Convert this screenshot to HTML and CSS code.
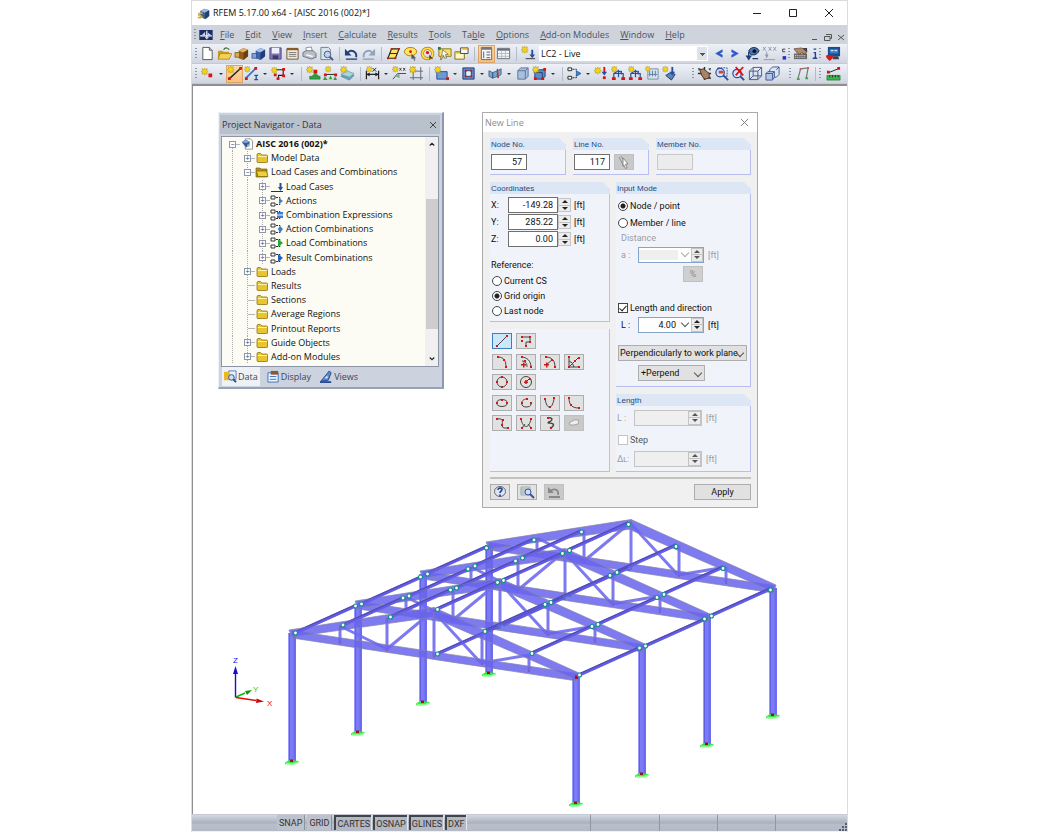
FILE: index.html
```html
<!DOCTYPE html>
<html lang="en">
<head>
<meta charset="utf-8">
<title>RFEM 5.17.00 x64 - [AISC 2016 (002)*]</title>
<link rel="stylesheet" href="styles.css">
</head>
<body>
<svg class="sprite" aria-hidden="true">
  <defs>
    <symbol id="cube" viewBox="0 0 16 16"><path d="M4 5l5-3 6 2v7l-5 4-6-3z" fill="#3d5f92"/><path d="M4 5l5-3 6 2-5 3z" fill="#9db8dc"/><path d="M10 7l5-3v7l-5 4z" fill="#23406e"/><path d="M7 8c-3-1-5 0-5 1.500s4 1 4 2.500-3 1.500-5 .5" fill="none" stroke="#e0a926" stroke-width="2"/></symbol>
    <symbol id="mdi" viewBox="0 0 16 12"><path d="M0 0h16v12H0z" fill="#1c2c66"/><path d="M1 7h14M9 1v10" stroke="#fff" stroke-width="1.400"/><path d="M3 6l4-4v4zM10 6V3l4 3zM7 8h4v2H7z" fill="#c9d3ef"/></symbol>
    <symbol id="new" viewBox="0 0 16 16"><path d="M3 1.500h7l3 3v10H3z" fill="#fff" stroke="#555"/><path d="M10 1.500v3h3" fill="#ddd" stroke="#555"/></symbol>
    <symbol id="open" viewBox="0 0 16 16"><path d="M1 5h5l1 1h6v8H1z" fill="#c99a1d"/><path d="M3.500 8H16l-3 6H1z" fill="#f2cf55" stroke="#92700f" stroke-width=".6"/><path d="M7 4c2-3 5-2 6 0" fill="none" stroke="#3c6b31" stroke-width="1.300"/></symbol>
    <symbol id="boxbrown" viewBox="0 0 16 16"><path d="M5 5l5-3 5 2v7l-5 4-5-2z" fill="#96601a"/><path d="M5 5l5-3 5 2-5 3z" fill="#e0b268"/><path d="M10 7l5-3v7l-5 4z" fill="#6b420e"/><path d="M1 7h5v5H1z" fill="#e0a845" stroke="#6b420e" stroke-width=".7"/></symbol>
    <symbol id="boxblue" viewBox="0 0 16 16"><path d="M5 5l5-3 5 2v7l-5 4-5-2z" fill="#3d66ad"/><path d="M5 5l5-3 5 2-5 3z" fill="#a5c3ef"/><path d="M10 7l5-3v7l-5 4z" fill="#203d7a"/><path d="M1 8h5v5H1z" fill="#7fa5e0" stroke="#203d7a" stroke-width=".7"/></symbol>
    <symbol id="save" viewBox="0 0 16 16"><path d="M2 2h12v12H2z" fill="#8076b5" stroke="#544b85"/><path d="M4 2h8v6H4z" fill="#eef0fa"/><path d="M5 10h6v4H5z" fill="#3f3a66"/></symbol>
    <symbol id="notes" viewBox="0 0 16 16"><path d="M2 3h12v11H2z" fill="#f3ead7" stroke="#6d5136"/><path d="M2 2h12v2.500H2z" fill="#8b5a2b"/><path d="M4 7h8M4 9h8M4 11h8" stroke="#7b7b7b"/></symbol>
    <symbol id="print" viewBox="0 0 16 16"><path d="M4 2l6-1 1 5H5z" fill="#fff" stroke="#777" stroke-width=".8"/><path d="M1 7l3-2h8l3 3v4l-5 2-9-3z" fill="#b6bcc8" stroke="#5a6070" stroke-width=".8"/><path d="M4 10l7 2 1-1.500-7-2z" fill="#f4f4f4"/></symbol>
    <symbol id="preview" viewBox="0 0 16 16"><path d="M2 1.500h8l2 2v11H2z" fill="#dbe3f0" stroke="#687"/><circle cx="9" cy="9" r="3.500" fill="#bcd2ee" stroke="#46587e"/><path d="M11.500 11.500l3.500 3.500" stroke="#46587e" stroke-width="2"/></symbol>
    <symbol id="undo" viewBox="0 0 16 16"><path d="M4 7c4-4 10-1 9 5" fill="none" stroke="#243f7c" stroke-width="2"/><path d="M1 3v7h7z" fill="#243f7c"/><path d="M2 14h12" stroke="#243f7c" stroke-width="1.400"/></symbol>
    <symbol id="redo" viewBox="0 0 16 16"><path d="M12 7c-4-4-10-1-9 5" fill="none" stroke="#8fa3bd" stroke-width="2"/><path d="M15 3v7H8z" fill="#8fa3bd"/><path d="M2 14h12" stroke="#8fa3bd" stroke-width="1.400"/></symbol>
    <symbol id="plane" viewBox="0 0 16 16"><path d="M6 3h8l-4 10H2z" fill="#ffe45c" stroke="#222" stroke-width="1.200"/><path d="M4 8h8" stroke="#222"/><path d="M5 2h2v2H5zM13 2h2v2h-2zM1 12h2v2H1zM9 12h2v2H9z" fill="#d11"/></symbol>
    <symbol id="ell" viewBox="0 0 16 16"><ellipse cx="8" cy="6" rx="6.500" ry="4.500" fill="#ffe45c" stroke="#a97b14"/><circle cx="8" cy="6" r="1.500" fill="#d11"/><path d="M9 8l5 5-2 0 1 2-1 1-1-3-2 1z" fill="#555"/></symbol>
    <symbol id="ring" viewBox="0 0 16 16"><circle cx="8" cy="8" r="5.500" fill="none" stroke="#c96c12" stroke-width="3.500"/><circle cx="8" cy="8" r="5.500" fill="none" stroke="#ffe03c" stroke-width="2"/><circle cx="8" cy="7" r="1.700" fill="#d11"/><path d="M10 9l4 5-3-1-1 2z" fill="#333"/></symbol>
    <symbol id="tip" viewBox="0 0 16 16"><path d="M2 3h13v8H7l-3 4v-4H2z" fill="#f8e060" stroke="#8a7620"/><path d="M6 4l6 5-3 0 1 4-2 0-1-3-2 1z" fill="#fff" stroke="#444" stroke-width=".6"/><path d="M1 1h3v3H1z" fill="#2c7a39"/></symbol>
    <symbol id="neww" viewBox="0 0 16 16"><path d="M1 6h10v8H1z" fill="#fff7c5" stroke="#7f6b1d"/><path d="M1 6h10v2H1z" fill="#d9b32d"/><path d="M7 2h8v6H7z" fill="#f7f7f7" stroke="#444"/><path d="M9 2l5 0v2H9z" fill="#e3b92b"/></symbol>
    <symbol id="list" viewBox="0 0 16 16"><path d="M2.500 1.500h11v13h-11z" fill="#f4f6fa" stroke="#666"/><path d="M3 2h10v2H3z" fill="#777"/><path d="M5 6v7M8 6.500h4M8 9.500h4M8 12.500h4" stroke="#555"/></symbol>
    <symbol id="grid" viewBox="0 0 16 16"><path d="M1.500 2.500h13v11h-13z" fill="#f4f6fa" stroke="#666"/><path d="M2 3h12v2H2z" fill="#667085"/><path d="M6 5v8M10 5v8M2 8h12M2 11h12" stroke="#b5b9c3"/></symbol>
    <symbol id="star" viewBox="0 0 10 10"><path d="M5 0l1.200 2.200L8.500 1l-.8 2.500L10 5l-2.300 1 .8 2.500-2.300-1L5 10 3.800 7.500l-2.300 1 .8-2.500L0 5l2.300-1.500L1.500 1l2.300 1.200z" fill="#f5d416" stroke="#a88a10" stroke-width=".6"/></symbol>
    <symbol id="lcase" viewBox="0 0 16 16"><path d="M5 13.500h10" stroke="#333"/><path d="M12 4v7" stroke="#27509b" stroke-width="2"/><path d="M9 9h6l-3 4z" fill="#27509b"/><use href="#star" width="8" height="8"/></symbol>
    <symbol id="prev" viewBox="0 0 16 16"><path d="M12 4L5 8l7 4V9.500L9 8l3-1.500z" fill="#2a57c8" stroke="#2a57c8" stroke-width=".6"/></symbol>
    <symbol id="next" viewBox="0 0 16 16"><path d="M4 4l7 4-7 4V9.500L7 8 4 6.500z" fill="#2a57c8" stroke="#2a57c8" stroke-width=".6"/></symbol>
    <symbol id="eye" viewBox="0 0 16 16"><path d="M4 5c3-5 9-4 11 0-2 5-7 5-9 4z" fill="#4a79bb" stroke="#13233f"/><circle cx="10" cy="5.500" r="2" fill="#111"/><path d="M4 6v7M2 11l2 3 2-3zM8 13.500h6" stroke="#1d3c78" stroke-width="1.500" fill="#1d3c78"/></symbol>
    <symbol id="xxx" viewBox="0 0 16 16"><path d="M1 1l3 4M4 1L1 5M7 1l3 4M10 1L7 5M12 1l3 4M15 1l-3 4M5 6v6M2 14.500h12" stroke="#8e99ab" fill="none"/><path d="M3 9h4l-2 4z" fill="#8e99ab"/></symbol>
    <symbol id="bits" viewBox="0 0 8 16"><path d="M3 3h3M3 3v3h3" stroke="#333" fill="none"/><path d="M3 11h4v4H3z" fill="#2035d0"/></symbol>
    <symbol id="info" viewBox="0 0 8 16"><path d="M3 3h3M3 7h2v6M2 13.500h5" stroke="#27408c" fill="none" stroke-width="1.600"/></symbol>
    <symbol id="handk" viewBox="0 0 16 16"><path d="M1 8h14v6H1z" fill="#666"/><path d="M2 10h12M2 12h12" stroke="#eee" stroke-dasharray="1 1"/><path d="M1 3l8-1 6 3-2 4-4-2-2 2-3-2z" fill="#b08a68" stroke="#3b2b1d" stroke-width=".6"/><path d="M10 2h5v5" fill="#3f3f46"/></symbol>
    <symbol id="mon" viewBox="0 0 16 16"><path d="M2 1h13v10H2z" fill="#1c4a92"/><path d="M4 3h9v5H4z" fill="#2f7fc4"/><path d="M5 5h3M9 5h3" stroke="#fff"/><path d="M8 11h5l1 3H7z" fill="#3a3f4b"/><path d="M0 11c0-2 4-2 4 0 0-2 4-2 4 0s-4 5-4 5-4-3-4-5z" fill="#d51818"/></symbol>
    <symbol id="node" viewBox="0 0 16 16"><use href="#star" x="1" y="2" width="8" height="8"/><path d="M9 8h4v4H9z" fill="#d11"/></symbol>
    <symbol id="line" viewBox="0 0 16 16"><path d="M2 14L14 3" stroke="#222" stroke-width="1.500"/><path d="M1 12h3v3H1zM13 1h3v3h-3z" fill="#d11"/><use href="#star" width="8" height="8"/></symbol>
    <symbol id="mline" viewBox="0 0 16 16"><path d="M2 13L12 3" stroke="#4773c0" stroke-width="2"/><path d="M1 12h3v3H1zM11 1h3v3h-3z" fill="#d11"/><use href="#star" width="7" height="7"/><path d="M11 10h4M11 14.500h4M13 10v4" stroke="#27509b" stroke-width="1.400"/></symbol>
    <symbol id="poly" viewBox="0 0 16 16"><path d="M4 4h9v6H8v4" stroke="#222" fill="none" stroke-width="1.200"/><path d="M12 2h3v3h-3zM12 9h3v3h-3zM6 12h3v3H6zM3 8h3v3H3z" fill="#d11"/><use href="#star" y="1" width="7" height="7"/></symbol>
    <symbol id="supp" viewBox="0 0 16 16"><path d="M10 7l4 4H6z" fill="#2da53f"/><path d="M4 11h11v3H4z" fill="#2da53f" stroke="#166b24" stroke-width=".6"/><path d="M8 4h4v4H8z" fill="#d11"/><use href="#star" width="8" height="8"/></symbol>
    <symbol id="lsup" viewBox="0 0 16 16"><path d="M2 9h12" stroke="#222"/><path d="M1 8h3v3H1zM12 8h3v3h-3z" fill="#d11"/><path d="M2 11l3 4H0zM13 11l2 4h-4zM8 10l2 4H6z" fill="#2da53f"/><use href="#star" x="2" width="7" height="7"/></symbol>
    <symbol id="slab" viewBox="0 0 16 16"><path d="M1 11l6-4 8 3-5 5z" fill="#6fa3bd" stroke="#47808b" stroke-width=".7"/><path d="M1 9l6-4 8 3-5 4z" fill="#a9d5de" stroke="#4b8d92" stroke-width=".6"/><use href="#star" width="8" height="8"/></symbol>
    <symbol id="dim" viewBox="0 0 16 16"><path d="M1.500 5v9M14.500 5v9M2 9h12" stroke="#222" stroke-width="1.300"/><path d="M1 9l4-2v4zM15 9l-4-2v4z" fill="#222"/><path d="M8 2l4 4M12 2L8 6" stroke="#222"/><use href="#star" x="1" width="7" height="7"/></symbol>
    <symbol id="note" viewBox="0 0 16 16"><path d="M1 14L6 8h9M8 2l2 3M10 2L8 5M12 2l2 3M14 2l-2 3" stroke="#444" fill="none"/><path d="M4 11l4-3v5z" fill="#7a8"/><use href="#star" width="7" height="7"/></symbol>
    <symbol id="guide" viewBox="0 0 16 16"><path d="M1 5.500h14M1 12.500h14M4.500 1v14M12.500 1v14" stroke="#5f6674"/><use href="#star" width="8" height="8"/></symbol>
    <symbol id="surf" viewBox="0 0 16 16"><path d="M3 6h11v8H3z" fill="#6b9ad4" stroke="#274f8c"/><path d="M13 12h3v3h-3z" fill="#d11"/><use href="#star" width="8" height="8"/></symbol>
    <symbol id="hole" viewBox="0 0 16 16"><path d="M2 2h12v12H2z" fill="#5b8dcc" stroke="#233f70"/><path d="M5 5h6v6H5z" fill="#e9f0f8" stroke="#233f70"/><path d="M4 4h2v2H4zM10 4h2v2h-2zM4 10h2v2H4zM10 10h2v2h-2z" fill="#d11"/></symbol>
    <symbol id="pipe" viewBox="0 0 16 16"><path d="M1 5l4 2v6l-4-2zM5 7l5-2v6l-5 2zM10 5l4-2v6l-4 3z" fill="#7ba6cf" stroke="#33567f" stroke-width=".8"/><path d="M10 3l1 10" stroke="#b83a3a" stroke-width="1.500"/></symbol>
    <symbol id="solid" viewBox="0 0 16 16"><path d="M3 5l3-3h8v9l-3 3H3z" fill="#a9bfdf" stroke="#5c7399"/><path d="M3 5h8v9M11 5l3-3" fill="none" stroke="#5c7399"/></symbol>
    <symbol id="solid2" viewBox="0 0 16 16"><path d="M3 7l3-3h8v7l-3 3H3z" fill="#5f8bcc" stroke="#234171"/><path d="M3 7h8v7" fill="none" stroke="#234171"/><path d="M2 12h3v3H2zM10 12h3v3h-3zM12 2h3v3h-3z" fill="#d11"/><use href="#star" width="8" height="8"/></symbol>
    <symbol id="comb" viewBox="0 0 16 16"><path d="M1 2h4v3H1zM1 11h4v3H1z" fill="#fff" stroke="#222"/><path d="M6 3.500h4v3M6 12.500h4V9" fill="none" stroke="#222" stroke-dasharray="2 1"/><path d="M10 5l5 3-5 3z" fill="#3b7ad6" stroke="#1b4a99" stroke-width=".6"/></symbol>
    <symbol id="nload" viewBox="0 0 16 16"><path d="M11 1v6" stroke="#d11" stroke-width="2"/><path d="M8 6h6l-3 4z" fill="#27509b"/><path d="M9.500 11h3v3h-3z" fill="#d11"/><use href="#star" y="1" width="8" height="8"/></symbol>
    <symbol id="mload" viewBox="0 0 16 16"><path d="M3 13V8h10v5M3 8l5-3 5 3M8 4v8M11 5v4" fill="none" stroke="#27509b" stroke-width="1.300"/><path d="M1 12h4v3H1zM11 12h4v3h-4z" fill="#d11"/><use href="#star" width="7" height="7"/></symbol>
    <symbol id="fload" viewBox="0 0 16 16"><path d="M3 3h11v11H3z" fill="#d5e0ea" stroke="#7a91a9"/><path d="M5 5v6M8 5v6M11 5v6M4 9h9" stroke="#5d7f9e"/><use href="#star" width="6" height="6"/></symbol>
    <symbol id="vload" viewBox="0 0 16 16"><path d="M4 10l5-3 5 2-4 6z" fill="#5b84b8" stroke="#1f3c66"/><path d="M11 1v6" stroke="#27509b" stroke-width="2"/><path d="M8 6h6l-3 4z" fill="#27509b"/><use href="#star" width="7" height="7"/></symbol>
    <symbol id="pan" viewBox="0 0 16 16"><path d="M8 1v14M1 8h14" stroke="#333" stroke-width="1.500"/><path d="M3 4l4-1 6 5 0 5-5 1-3-4z" fill="#a98365" stroke="#382518" stroke-width=".9"/><path d="M1 2l3 1-2 2zM15 2l-3 1 2 2zM15 14l-3-1 2-2z" fill="#333"/></symbol>
    <symbol id="zoomw" viewBox="0 0 16 16"><path d="M4 2h10v9H4z" fill="none" stroke="#3154a5" stroke-dasharray="2 1"/><circle cx="6.500" cy="7" r="4.500" fill="#d8e5f8" stroke="#2c4e9c" stroke-width="1.300"/><path d="M5 5h5v3H5z" fill="#c44"/><path d="M10 10l5 5" stroke="#2c4e9c" stroke-width="2"/></symbol>
    <symbol id="zoomx" viewBox="0 0 16 16"><circle cx="6.500" cy="8" r="4.500" fill="#d8e5f8" stroke="#2c4e9c" stroke-width="1.300"/><path d="M5 1l8 9M13 1L5 10" stroke="#d11" stroke-width="1.800"/><path d="M10 11l4 4" stroke="#2c4e9c" stroke-width="2"/></symbol>
    <symbol id="iso" viewBox="0 0 16 16"><path d="M1.500 5.500h9v9h-9zM5.500 1.500h9v9M1.500 5.500l4-4M10.500 5.500l4-4M10.500 14.500l4-4M5.500 1.500v9h9M1.500 14.500l4-4" fill="none" stroke="#3f5b93"/></symbol>
    <symbol id="iso2" viewBox="0 0 16 16"><path d="M5 4l3-3h7v8l-3 3H5z" fill="#dbe5f5" stroke="#3f5b93"/><path d="M1 8l2-2h7v6l-2 3H1z" fill="#b4c6e6" stroke="#3f5b93"/><path d="M1 8h7v6M8 8l2-2M12 4l3-3" fill="none" stroke="#3f5b93"/></symbol>
    <symbol id="frm" viewBox="0 0 16 16"><path d="M3 14L6 3l8-1-2 11" fill="none" stroke="#777" stroke-width="1.300"/><path d="M2 13h3v2H2zM11 12h3v2h-3z" fill="#3a4"/><path d="M5 2h2v2H5zM13 1h2v2h-2z" fill="#d55"/></symbol>
    <symbol id="meas" viewBox="0 0 16 16"><path d="M1 10h14v5H1z" fill="#39b54a" stroke="#1d7129" stroke-width=".7"/><path d="M3 7l10-4M4 10v2M7 10v2M10 10v2M13 10v2" stroke="#222"/><path d="M1 5h3v3H1zM12 1h3v3h-3z" fill="#d11"/></symbol>
    <symbol id="folder" viewBox="0 0 14 12"><path d="M2 3q0-1.500 1-1.500h2.500L7 3h4.500q1 0 1 1v6q0 .5-1 .5h-9q-.5 0-.5-1z" fill="#e8c52e" stroke="#8f7413" stroke-width=".8"/><path d="M3 4.500h9" stroke="#fff3a5"/></symbol>
    <symbol id="folderopen" viewBox="0 0 14 12"><path d="M1 2h4l1 1h6v8H1z" fill="#b68f16" stroke="#7c6210" stroke-width=".7"/><path d="M1.500 5h10l1.500 5.500H3z" fill="#f0cf3c" stroke="#7c6210" stroke-width=".7"/></symbol>
    <symbol id="model" viewBox="0 0 14 14"><path d="M5 1h6l2.500 2.500V13H5z" fill="#fff" stroke="#888"/><path d="M1 5l4-3 5 2v4l-4 3z" fill="#345791"/><path d="M1 5l4-3 5 2-4 2z" fill="#7fa1d6"/><path d="M7 8l3-2v4H7z" fill="#9aa6b8"/></symbol>
    <symbol id="tload" viewBox="0 0 14 12"><path d="M1 10.500h12" stroke="#333"/><path d="M10.500 2v4" stroke="#27509b" stroke-width="2"/><path d="M8 6h5l-2.500 4z" fill="#27509b"/></symbol>
    <symbol id="tcomb" viewBox="0 0 14 12"><path d="M1 1h4v3H1zM1 8h4v3H1z" fill="#fff" stroke="#333"/><path d="M6 2.500h4v2M6 9.500h4v-2" fill="none" stroke="#333" stroke-dasharray="2 1"/></symbol>
    <g id="sup"><path d="M-7 .5l4-2.500 10 1-4 3-10 .2z" fill="#35e843"/><path d="M-7 .5l8 .8 6-2v1.200l-4 2-8 .2z" fill="#8dff8f"/><rect x="-2" y="-2.500" width="3" height="2.500" fill="#8e1717"/></g>
  </defs>
</svg>

<div class="app">
  <header class="titlebar">
    <svg class="app-icon"><use href="#cube"/></svg>
    <h1 class="app-title">RFEM 5.17.00 x64 - [AISC 2016 (002)*]</h1>
    <button class="sys" aria-label="Minimize"><svg viewBox="0 0 10 10"><path d="M1 5.500h8"/></svg></button>
    <button class="sys" aria-label="Maximize"><svg viewBox="0 0 10 10"><path d="M1.500 1.500h7v7h-7z"/></svg></button>
    <button class="sys" aria-label="Close"><svg viewBox="0 0 10 10"><path d="M1 1l8 8M9 1L1 9"/></svg></button>
  </header>

  <nav class="menubar" aria-label="Main menu">
    <span class="grip"></span>
    <svg class="mdi-icon"><use href="#mdi"/></svg>
    <button><u>F</u>ile</button><button><u>E</u>dit</button><button><u>V</u>iew</button><button><u>I</u>nsert</button><button><u>C</u>alculate</button><button><u>R</u>esults</button><button><u>T</u>ools</button><button>Ta<u>b</u>le</button><button><u>O</u>ptions</button><button><u>A</u>dd-on Modules</button><button><u>W</u>indow</button><button><u>H</u>elp</button>
    <span class="child-controls">
      <button aria-label="Minimize document"><svg viewBox="0 0 8 8"><path d="M1 6.500h5"/></svg></button>
      <button aria-label="Restore document"><svg viewBox="0 0 8 8"><path d="M2 1.500h5.500v4H6M.5 3.500H6v4H.5z"/></svg></button>
      <button aria-label="Close document"><svg viewBox="0 0 8 8"><path d="M1 2l6 5M7 2L1 7"/></svg></button>
    </span>
  </nav>

  <div class="toolbar" role="toolbar" aria-label="Standard">
    <span class="grip"></span>
    <button class="tool" aria-label="New"><svg><use href="#new"/></svg></button>
    <button class="tool" aria-label="Open"><svg><use href="#open"/></svg></button>
    <button class="tool" aria-label="Project manager"><svg><use href="#boxbrown"/></svg></button>
    <button class="tool" aria-label="Block manager"><svg><use href="#boxblue"/></svg></button>
    <button class="tool" aria-label="Save"><svg><use href="#save"/></svg></button>
    <button class="tool" aria-label="Report"><svg><use href="#notes"/></svg></button>
    <button class="tool" aria-label="Print"><svg><use href="#print"/></svg></button>
    <button class="tool" aria-label="Preview"><svg><use href="#preview"/></svg></button>
    <span class="sep"></span>
    <button class="tool" aria-label="Undo"><svg><use href="#undo"/></svg></button>
    <button class="tool" aria-label="Redo"><svg><use href="#redo"/></svg></button>
    <span class="sep"></span>
    <button class="tool" aria-label="Work plane"><svg><use href="#plane"/></svg></button>
    <button class="tool" aria-label="Ellipse selection"><svg><use href="#ell"/></svg></button>
    <button class="tool" aria-label="Ring selection"><svg><use href="#ring"/></svg></button>
    <button class="tool" aria-label="Special selection"><svg><use href="#tip"/></svg></button>
    <button class="tool" aria-label="New window"><svg><use href="#neww"/></svg></button>
    <span class="sep"></span>
    <button class="tool is-on" aria-label="Navigator"><svg><use href="#list"/></svg></button>
    <button class="tool" aria-label="Tables"><svg><use href="#grid"/></svg></button>
    <span class="sep"></span>
    <button class="tool" aria-label="New load case"><svg><use href="#lcase"/></svg></button>
    <span class="case-select"><select aria-label="Load case"><option>LC2 - Live</option></select></span>
    <button class="tool" aria-label="Previous"><svg><use href="#prev"/></svg></button>
    <button class="tool" aria-label="Next"><svg><use href="#next"/></svg></button>
    <button class="tool" aria-label="Show loads"><svg><use href="#eye"/></svg></button>
    <button class="tool" aria-label="Show values"><svg><use href="#xxx"/></svg></button>
    <button class="tool tool-slim" aria-label="More"><svg><use href="#bits"/></svg></button>
    <span class="grip"></span>
    <button class="tool" aria-label="Input"><svg><use href="#handk"/></svg></button>
    <button class="tool tool-slim" aria-label="Information"><svg><use href="#info"/></svg></button>
    <span class="grip"></span>
    <button class="tool tool-last" aria-label="Modules"><svg><use href="#mon"/></svg></button>
  </div>

  <div class="toolbar" role="toolbar" aria-label="Insert">
    <span class="grip"></span>
    <button class="tool" aria-label="Node"><svg><use href="#node"/></svg></button><button class="caret" aria-label="Node options"></button>
    <button class="tool is-on" aria-label="Line"><svg><use href="#line"/></svg></button>
    <button class="tool" aria-label="Member"><svg><use href="#mline"/></svg></button><button class="caret" aria-label="Member options"></button>
    <button class="tool" aria-label="Polyline"><svg><use href="#poly"/></svg></button><button class="caret" aria-label="Polyline options"></button>
    <span class="sep"></span>
    <button class="tool" aria-label="Nodal support"><svg><use href="#supp"/></svg></button>
    <button class="tool" aria-label="Line support"><svg><use href="#lsup"/></svg></button>
    <button class="tool" aria-label="Surface support"><svg><use href="#slab"/></svg></button>
    <span class="sep"></span>
    <button class="tool" aria-label="Dimension"><svg><use href="#dim"/></svg></button><button class="caret" aria-label="Dimension options"></button>
    <button class="tool" aria-label="Comment"><svg><use href="#note"/></svg></button>
    <button class="tool" aria-label="Guidelines"><svg><use href="#guide"/></svg></button>
    <span class="sep"></span>
    <button class="tool" aria-label="Surface"><svg><use href="#surf"/></svg></button><button class="caret" aria-label="Surface options"></button>
    <button class="tool" aria-label="Opening"><svg><use href="#hole"/></svg></button><button class="caret" aria-label="Opening options"></button>
    <button class="tool" aria-label="Intersection"><svg><use href="#pipe"/></svg></button><button class="caret" aria-label="Intersection options"></button>
    <button class="tool" aria-label="Solid"><svg><use href="#solid"/></svg></button>
    <button class="tool" aria-label="New solid"><svg><use href="#solid2"/></svg></button><button class="caret" aria-label="Solid options"></button>
    <span class="sep"></span>
    <button class="tool" aria-label="Combination"><svg><use href="#comb"/></svg></button><button class="caret" aria-label="Combination options"></button>
    <button class="tool" aria-label="Nodal load"><svg><use href="#nload"/></svg></button>
    <button class="tool" aria-label="Member load"><svg><use href="#mload"/></svg></button>
    <button class="tool" aria-label="Line load"><svg><use href="#mload"/></svg></button>
    <button class="tool" aria-label="Surface load"><svg><use href="#fload"/></svg></button>
    <button class="tool" aria-label="Solid load"><svg><use href="#vload"/></svg></button>
    <span class="stretch"></span>
    <span class="grip"></span>
    <button class="tool" aria-label="Pan"><svg><use href="#pan"/></svg></button>
    <button class="tool" aria-label="Zoom window"><svg><use href="#zoomw"/></svg></button>
    <button class="tool" aria-label="Zoom all"><svg><use href="#zoomx"/></svg></button>
    <button class="tool" aria-label="Isometric"><svg><use href="#iso"/></svg></button>
    <button class="tool" aria-label="Views"><svg><use href="#iso2"/></svg></button>
    <span class="grip grip-wide"></span>
    <button class="tool" aria-label="Frame"><svg><use href="#frm"/></svg></button>
    <span class="sep"></span><span class="grip"></span>
    <button class="tool tool-last" aria-label="Measure"><svg><use href="#meas"/></svg></button>
  </div>

  <main class="canvas">
    <svg class="model" viewBox="193 87 654 726" preserveAspectRatio="xMidYMid meet" role="img" aria-label="Steel hall with four truss frames">
      <defs>
        <linearGradient id="col" x1="0" x2="1" y1="0" y2="0"><stop offset="0" stop-color="#9a9afa"/><stop offset=".12" stop-color="#9a9afa"/><stop offset=".13" stop-color="#605fe0"/><stop offset=".28" stop-color="#605fe0"/><stop offset=".3" stop-color="#7b7bf8"/><stop offset=".68" stop-color="#7b7bf8"/><stop offset=".7" stop-color="#6664ea"/><stop offset="1" stop-color="#7371ef"/></linearGradient>
        <g id="frame">
          <rect x="288" y="633" width="8" height="129" fill="url(#col)"/>
          <rect x="572" y="676" width="8" height="128" fill="url(#col)"/>
          <use href="#sup" x="292" y="762"/><use href="#sup" x="576" y="804"/>
          <path d="M340 628v15M387 620v30M434 612v44M482 633v30M529 655v15M340 626l47 23M387 649l47-39M434 612l47 51M481 663l48-8" fill="none" stroke="#6f6bf0" stroke-opacity=".9" stroke-width="3"/>
          <g fill="#6964ee" fill-opacity=".86" stroke="#8583a8" stroke-width=".7">
            <path d="M292 630.500L577 673.500v7.500L292 638z"/>
            <path d="M289 630L434 607.500v9.500L292 637z"/>
            <path d="M434 607.500L579 673l-2 7-143-62z"/>
          </g>
          <path d="M339 643h2M386 650h2M433 657h2M481 664h2M528 671h2M433 611h2M339 627h2M386 619h2" stroke="#8a55a8" stroke-width="1.500"/>
        </g>
        <g id="bay">
          <path d="M295 633l60-27M343 625l60-27M390 617l60-27M437 609l60-27M485 631l60-27M532 653l60-27M579 675l60-27M437 654l60-27" stroke="#625ce8" stroke-width="3.400"/>
          <path d="M295 632l60-27M343 624l60-27M390 616l60-27M437 608l60-27M485 630l60-27M532 652l60-27M579 674l60-27M437 653l60-27" stroke="#4f4a9c" stroke-width=".9"/>
        </g>
        <g id="dots" fill="#fff" stroke="#159090" stroke-width="1.200">
          <circle cx="295.500" cy="633" r="2"/><circle cx="343" cy="625" r="2"/><circle cx="390.500" cy="617" r="2"/><circle cx="437.500" cy="609.500" r="2"/><circle cx="485" cy="631.500" r="2"/><circle cx="532" cy="653.500" r="2"/><circle cx="579.500" cy="675" r="2"/>
        </g>
      </defs>
      <use href="#frame" transform="translate(197 -88)"/>
      <use href="#bay" transform="translate(131 -59)"/>
      <use href="#frame" transform="translate(131 -59)"/>
      <use href="#bay" transform="translate(66 -29)"/>
      <use href="#frame" transform="translate(66 -29)"/>
      <use href="#bay"/>
      <use href="#frame"/>
      <g opacity=".6"><use href="#bay"/><use href="#bay" transform="translate(66 -29)"/><use href="#bay" transform="translate(131 -59)"/></g>
      <path d="M575 675.500h3v3.500h-3z" fill="#b01030"/>
      <use href="#dots" transform="translate(191 -85)"/>
      <use href="#dots" transform="translate(132 -59)"/><use href="#dots" transform="translate(125 -56)"/>
      <use href="#dots" transform="translate(66 -29)"/><use href="#dots" transform="translate(60 -27)"/>
      <use href="#dots"/>
      <circle cx="437.500" cy="654" r="2" fill="#fff" stroke="#159090" stroke-width="1.200"/>
      <path d="M497 628h2M503 625h2M563 599h2M569 596h2M628 570h2" stroke="#159090" stroke-width="1.500"/>
      <g stroke-width="1.400">
        <path d="M235.500 697.500V674" stroke="#1010d0"/><path d="M235.500 666l2.500 8h-5z" fill="#1010d0"/>
        <path d="M236 697l9-4" stroke="#0db50d"/><path d="M252 690l-5 5-2-4z" fill="#0a9a0a"/>
        <path d="M236 697.500l20 3" stroke="#e00a0a"/><path d="M264 701.500l-8 1.500.5-4.500z" fill="#c80808"/>
      </g>
      <g class="axis-text"><text x="233" y="663" fill="#1010f0">Z</text><text x="253" y="692" fill="#10d010">Y</text><text x="267" y="706" fill="#f01010">X</text></g>
    </svg>

    <section class="navigator" aria-label="Project Navigator">
      <header class="nav-title"><h2>Project Navigator - Data</h2><button aria-label="Close navigator"><svg viewBox="0 0 8 8"><path d="M1 1l6 6M7 1L1 7"/></svg></button></header>
      <div class="nav-body">
        <ul class="tree" role="tree">
          <li class="root"><i class="joint"><b>−</b></i><svg><use href="#model"/></svg><strong>AISC 2016 (002)*</strong></li>
          <li><i class="rail"></i><i class="joint"><b>+</b></i><svg><use href="#folder"/></svg>Model Data</li>
          <li><i class="rail"></i><i class="joint"><b>−</b></i><svg><use href="#folderopen"/></svg>Load Cases and Combinations</li>
          <li><i class="rail"></i><i class="rail"></i><i class="joint"><b>+</b></i><svg><use href="#tload"/></svg>Load Cases</li>
          <li><i class="rail"></i><i class="rail"></i><i class="joint"><b>+</b></i><svg viewBox="0 0 14 12"><use href="#tcomb"/><path d="M9 3l4 3-4 3z" fill="#3b7ad6"/></svg>Actions</li>
          <li><i class="rail"></i><i class="rail"></i><i class="joint"><b>+</b></i><svg viewBox="0 0 14 12"><use href="#tcomb"/><path d="M7 3h6v2.500H7zM7 6.500h6V9H7z" fill="#3b7ad6"/></svg>Combination Expressions</li>
          <li><i class="rail"></i><i class="rail"></i><i class="joint"><b>+</b></i><svg viewBox="0 0 14 12"><use href="#tcomb"/><path d="M10 3l3 3-3 4-2-4z" fill="#3b7ad6"/></svg>Action Combinations</li>
          <li><i class="rail"></i><i class="rail"></i><i class="joint"><b>+</b></i><svg viewBox="0 0 14 12"><use href="#tcomb"/><path d="M8 2l5 4-5 4z" fill="#21a83a"/></svg>Load Combinations</li>
          <li><i class="rail"></i><i class="rail"></i><i class="joint"><b>+</b></i><svg viewBox="0 0 14 12"><use href="#tcomb"/><path d="M8 2l5 4-5 4z" fill="#2060c0"/></svg>Result Combinations</li>
          <li><i class="rail"></i><i class="joint"><b>+</b></i><svg><use href="#folder"/></svg>Loads</li>
          <li><i class="rail"></i><i class="joint"></i><svg><use href="#folder"/></svg>Results</li>
          <li><i class="rail"></i><i class="joint"></i><svg><use href="#folder"/></svg>Sections</li>
          <li><i class="rail"></i><i class="joint"></i><svg><use href="#folder"/></svg>Average Regions</li>
          <li><i class="rail"></i><i class="joint"></i><svg><use href="#folder"/></svg>Printout Reports</li>
          <li><i class="rail"></i><i class="joint"><b>+</b></i><svg><use href="#folder"/></svg>Guide Objects</li>
          <li><i class="rail"></i><i class="joint"><b>+</b></i><svg><use href="#folder"/></svg>Add-on Modules</li>
        </ul>
        <div class="scroll" aria-hidden="true"><svg viewBox="0 0 8 8"><path d="M1 6l3-3 3 3"/></svg><span class="track"><span class="thumb"></span></span><svg viewBox="0 0 8 8"><path d="M1 2l3 3 3-3"/></svg></div>
      </div>
      <div class="nav-tabs" role="tablist">
        <button role="tab" class="is-active"><svg viewBox="0 0 14 14"><path d="M5 1h8v9H5z" fill="#e9f0fb" stroke="#5279bd"/><path d="M0 2h6v9H0z" fill="#e7b929"/><circle cx="8" cy="8" r="3" fill="#cfe0f5" stroke="#234a8c"/><path d="M10 10l3 3" stroke="#234a8c" stroke-width="2"/></svg>Data</button>
        <button role="tab"><svg viewBox="0 0 14 14"><path d="M1 3h11v10H1z" fill="#eaf2fc" stroke="#3a70b8"/><path d="M3 7h7M3 10h7" stroke="#3a70b8"/><path d="M4 1h8v4H4z" fill="#8a5636"/></svg>Display</button>
        <button role="tab"><svg viewBox="0 0 14 14"><path d="M1 12L10 1l2 2-3 8z" fill="#5a86d0" stroke="#244b94"/><path d="M0 13h12" stroke="#244b94" stroke-width="2"/><path d="M5 9l3-3v3z" fill="#fff"/></svg>Views</button>
      </div>
    </section>

    <form class="dialog" aria-label="New Line">
      <header class="dialog-title"><h2>New Line</h2><button type="button" aria-label="Close dialog"><svg viewBox="0 0 10 10"><path d="M1 1l8 8M9 1L1 9"/></svg></button></header>
      <div class="dialog-body">
        <div class="top-row">
          <section class="group"><h3><label for="node-no">Node No.</label></h3><div class="number-line"><input id="node-no" class="field" value="57"></div></section>
          <section class="group"><h3><label for="line-no">Line No.</label></h3><div class="number-line"><input id="line-no" class="field" value="117"><button type="button" class="btn pick" aria-label="Pick line"><svg viewBox="0 0 18 14"><path d="M4 2l5 10M6 1l3 4" stroke="#8f8f8f"/><path d="M8 3l5 6h-2.500l1.500 4-1.500.5-1.500-3.500-1 1z" fill="#fff" stroke="#777" stroke-width=".8"/></svg></button></div></section>
          <section class="group"><h3><label for="member-no">Member No.</label></h3><div class="number-line"><input id="member-no" class="field" disabled></div></section>
        </div>
        <div class="columns">
          <div class="col">
            <section class="group coordinates"><h3>Coordinates</h3>
              <div class="coord"><label for="cx">X:</label><input id="cx" class="field" value="-149.28"><span class="spin"><button type="button" aria-label="X up"></button><button type="button" aria-label="X down"></button></span><span>[ft]</span></div>
              <div class="coord"><label for="cy">Y:</label><input id="cy" class="field" value="285.22"><span class="spin"><button type="button" aria-label="Y up"></button><button type="button" aria-label="Y down"></button></span><span>[ft]</span></div>
              <div class="coord"><label for="cz">Z:</label><input id="cz" class="field" value="0.00"><span class="spin"><button type="button" aria-label="Z up"></button><button type="button" aria-label="Z down"></button></span><span>[ft]</span></div>
              <p class="ref-label">Reference:</p>
              <label class="choice"><input type="radio" name="ref">Current CS</label>
              <label class="choice"><input type="radio" name="ref" checked>Grid origin</label>
              <label class="choice"><input type="radio" name="ref">Last node</label>
            </section>
            <section class="group shapes" aria-label="Line type">
              <div class="shape-grid">
                <button type="button" class="btn is-picked c1" aria-label="Line"><svg viewBox="0 0 18 14"><path d="M4 12L14 2"/><path class="r" d="M3 11h2v2H3zM13 1h2v2h-2z"/></svg></button>
                <button type="button" class="btn" aria-label="Polyline"><svg viewBox="0 0 18 14"><path d="M5 3h8v5H9v4"/><path class="r" d="M4 2h2v2H4zM12 2h2v2h-2zM12 7h2v2h-2zM8 11h2v2H8zM4 6h2v2H4z"/></svg></button>
                <button type="button" class="btn c1" aria-label="Arc"><svg viewBox="0 0 18 14"><path d="M5 2c6 0 8 4 8 10"/><path class="r" d="M4 1h2v2H4zM10 4h2v2h-2zM12 11h2v2h-2z"/></svg></button>
                <button type="button" class="btn" aria-label="Arc by centre"><svg viewBox="0 0 18 14"><path d="M4 2c6 0 10 4 10 10M5 6c3 0 5 2 5 6"/><path class="r" d="M4 1h2v2H4zM7 5h2v2H7zM13 11h2v2h-2zM4 9h5v1.500H4zM6 7.500h1.500v5H6z"/></svg></button>
                <button type="button" class="btn" aria-label="Arc by angle"><svg viewBox="0 0 18 14"><path d="M5 2c6 0 9 4 9 10M5 10l6-5"/><path class="r" d="M4 1h2v2H4zM10 4h2v2h-2zM13 11h2v2h-2zM3 9h5v1.500H3zM5 7.500h1.500v5H5z"/></svg></button>
                <button type="button" class="btn" aria-label="Tangent arc"><svg viewBox="0 0 18 14"><path d="M4 2v10h11M5 11l8-8M4 6q4 1 5 6"/><path class="r" d="M3 1h2v2H3zM3 11h2v2H3zM13 11h2v2h-2zM9 5h2v2H9zM13 2h2v2h-2z"/></svg></button>
                <button type="button" class="btn c1" aria-label="Circle"><svg viewBox="0 0 18 14"><circle cx="9" cy="7" r="5"/><path class="r" d="M8 1h2v2H8zM3 6h2v2H3zM13 6h2v2h-2zM8 11h2v2H8z"/></svg></button>
                <button type="button" class="btn" aria-label="Circle by radius"><svg viewBox="0 0 18 14"><circle cx="9" cy="7" r="5.500"/><path d="M9 7l3-3"/><path class="r" d="M7 6.500h4V8H7zM8.200 5h1.600v4H8.200zM12 3h2v2h-2z"/></svg></button>
                <button type="button" class="btn c1" aria-label="Ellipse"><svg viewBox="0 0 18 14"><ellipse cx="9" cy="7" rx="5.500" ry="3.500"/><path class="r" d="M3 6h2v2H3zM13 6h2v2h-2zM8 3h2v2H8z"/></svg></button>
                <button type="button" class="btn" aria-label="Elliptical arc"><svg viewBox="0 0 18 14"><path d="M10 3c-7 0-7 8-1 8 3 0 5-1 5-3"/><path class="r" d="M9 2h2v2H9zM4 6h2v2H4zM13 6h2v2h-2z"/></svg></button>
                <button type="button" class="btn" aria-label="Parabola"><svg viewBox="0 0 18 14"><path d="M4 3c2 11 7 11 9 0"/><path class="r" d="M3 2h2v2H3zM12 1h2v2h-2zM8 10h2v2H8z"/></svg></button>
                <button type="button" class="btn" aria-label="Hyperbola"><svg viewBox="0 0 18 14"><path d="M4 2c0 8 4 10 10 10"/><path class="r" d="M3 1h2v2H3zM5 8h2v2H5zM13 11h2v2h-2z"/></svg></button>
                <button type="button" class="btn c1" aria-label="Spline"><svg viewBox="0 0 18 14"><path d="M4 3c10-2 2 8 7 9h4"/><path class="r" d="M3 2h2v2H3zM9 3h2v2H9zM8 8h2v2H8zM14 11h2v2h-2z"/></svg></button>
                <button type="button" class="btn" aria-label="NURBS"><svg viewBox="0 0 18 14"><path d="M4 3c2 10 8 10 10 0M5 12l3-4M14 12l-3-4"/><path class="r" d="M3 2h2v2H3zM13 2h2v2h-2zM4 11h2v2H4zM13 11h2v2h-2z"/></svg></button>
                <button type="button" class="btn" aria-label="Trajectory"><svg viewBox="0 0 18 14"><path d="M7 2c4-1 6 2 1 4-4 2 7 0 4 4-1 2-2 1-3 2" stroke-width="1.400"/><path class="r" d="M6 1h2v2H6zM9 11h2v2H9z"/></svg></button>
                <button type="button" class="btn is-off" disabled aria-label="Line on surface"><svg viewBox="0 0 18 14"><path d="M4 7l5-3h5l-1 4-4 1H5z" fill="#eee" stroke="#a5a5a5"/></svg></button>
              </div>
            </section>
          </div>
          <div class="col">
            <section class="group input-mode"><h3>Input Mode</h3>
              <label class="choice"><input type="radio" name="mode" checked>Node / point</label>
              <label class="choice"><input type="radio" name="mode">Member / line</label>
              <p class="muted distance">Distance</p>
              <div class="measure muted"><label for="dist">a :</label><span class="combo"><input id="dist" disabled><button type="button" class="chev" aria-label="Distance list"></button><span class="spin"><button type="button" aria-label="Distance up"></button><button type="button" aria-label="Distance down"></button></span></span><span>[ft]</span></div>
              <button type="button" class="btn percent" disabled>%</button>
              <label class="choice check-line"><input type="checkbox" checked>Length and direction</label>
              <div class="measure"><label for="len">L :</label><span class="combo"><input id="len" value="4.00"><button type="button" class="chev" aria-label="Length list"></button><span class="spin"><button type="button" aria-label="Length up"></button><button type="button" aria-label="Length down"></button></span></span><span>[ft]</span></div>
              <span class="picker picker-wide"><select aria-label="Direction"><option>Perpendicularly to work plane</option></select></span>
              <span class="picker picker-short"><select aria-label="Sense"><option>+Perpend</option></select></span>
            </section>
            <section class="group length"><h3>Length</h3>
              <div class="measure muted"><label for="l2">L :</label><span class="plain"><input id="l2" disabled><span class="spin"><button type="button" aria-label="L up"></button><button type="button" aria-label="L down"></button></span></span><span>[ft]</span></div>
              <label class="choice step"><input type="checkbox" disabled>Step</label>
              <div class="measure muted"><label for="dl">Δʟ:</label><span class="plain"><input id="dl" disabled><span class="spin"><button type="button" aria-label="Step up"></button><button type="button" aria-label="Step down"></button></span></span><span>[ft]</span></div>
            </section>
          </div>
        </div>
        <footer class="dialog-foot">
          <button type="button" class="btn" aria-label="Help"><svg viewBox="0 0 18 14"><ellipse cx="9" cy="6.500" rx="5.500" ry="5" fill="#dde6f3" stroke="#667"/><path d="M7 5c0-3 5-2 4 0-.5 1-2 1-2 3M9 9.500v2" stroke="#22408c" stroke-width="1.600"/></svg></button>
          <button type="button" class="btn" aria-label="Details"><svg viewBox="0 0 18 14"><path d="M3 2h9v8H3zM3 4h9M3 6h9M3 8h9" stroke="#9aa"/><circle cx="10" cy="7" r="3" fill="#cfdcf2" stroke="#3450a0"/><path d="M12 9l4 4" stroke="#3450a0" stroke-width="2"/></svg></button>
          <button type="button" class="btn is-off" disabled aria-label="Undo"><svg viewBox="0 0 18 14"><path d="M5 6c4-3 9-2 8 4M4 12h11" stroke="#888" stroke-width="1.800"/><path d="M3 2v6h6z" fill="#888" stroke="none"/></svg></button>
          <button type="button" class="btn apply">Apply</button>
        </footer>
      </div>
    </form>
  </main>

  <footer class="statusbar">
    <div class="modes"><button>SNAP</button><button>GRID</button><button class="is-down">CARTES</button><button class="is-down">OSNAP</button><button class="is-down">GLINES</button><button class="is-down">DXF</button></div>
    <span class="pane pane-rest"></span><span class="pane pane-a"></span><span class="pane pane-b"></span><span class="pane pane-b"></span>
    <span class="pane pane-c"><svg viewBox="0 0 9 9"><path d="M7 1h2v2H7zM4 4h2v2H4zM7 4h2v2H7zM1 7h2v2H1zM4 7h2v2H4zM7 7h2v2H7z" fill="#596070"/></svg></span>
  </footer>
</div>
</body>
</html>
```
FILE: styles.css
```css
* { box-sizing: border-box; }

body {
  margin: 0;
  padding: 0 192px 0 191px;
  background: #fff;
  font: 9px/12px "Open Sans", "Noto Sans", sans-serif;
  color: #111;
}

h1, h2, h3, p, ul { margin: 0; padding: 0; font-size: inherit; font-weight: normal; }
button, input, select { font: inherit; color: inherit; margin: 0; padding: 0; border: 0; background: none; border-radius: 0; }
button { cursor: default; }
svg { display: block; flex: none; }
.sprite { position: absolute; width: 0; height: 0; }

.app {
  display: flex;
  flex-direction: column;
  height: 100vh;
  min-height: 480px;
  border: 1px solid #dcdcdc;
  border-bottom-color: #f0f0f0;
  overflow: hidden;
}

/* title bar */
.titlebar { display: flex; align-items: center; height: 24px; padding-left: 5px; }
.app-icon { width: 13px; height: 13px; margin-right: 3px; }
.app-title { flex: 1; }
.sys { display: grid; place-items: center; width: 36px; height: 22px; }
.sys svg { width: 10px; height: 10px; fill: none; stroke: #222; }

/* menu */
.menubar { display: flex; align-items: center; height: 19px; padding-left: 2px; background: #cfd3dc; color: #4b5362; }
.menubar > button { margin-right: 11px; }
.mdi-icon { width: 14px; height: 10px; margin: 0 7px 0 1px; }
.child-controls { display: flex; gap: 5px; margin-left: auto; padding: 4px 2px 0 0; }
.child-controls svg { width: 8px; height: 8px; fill: none; stroke: #555; }

/* toolbars */
.toolbar {
  display: flex;
  align-items: center;
  height: 20px;
  padding-left: 3px;
  background: linear-gradient(#eef1f7, #dce1ea 60%, #d0d5e0);
  border-bottom: 1px solid #c3c9d5;
  overflow: hidden;
}
.grip { flex: none; width: 2px; height: 12px; margin-right: 2px; background: repeating-linear-gradient(#8e96a6 0 1px, transparent 1px 3px); }
.grip-wide { margin: 0 3px 0 8px; }
.tool { flex: none; display: grid; place-items: center; width: 17px; height: 18px; }
.tool svg { width: 15px; height: 15px; }
.tool-slim { width: 10px; }
.tool-slim svg { width: 7px; }
.tool-last { margin: 0 5px 0 2px; }
.is-on { background: linear-gradient(#fbdcae, #f9bf78); outline: 1px solid #dba468; outline-offset: -1px; }
.sep { flex: none; width: 1px; height: 14px; margin: 0 3px 0 4px; background: #b3bac8; }
.caret { flex: none; width: 10px; height: 18px; display: grid; place-items: center; }
.caret::after { content: ""; border: 2px solid transparent; border-top-color: #333; border-bottom: 0; }
.stretch { flex: 1; }
.case-select { position: relative; flex: 1; margin: 0 2px; }
.case-select select { display: block; width: 100%; height: 15px; padding-left: 2px; background: #fff; appearance: none; }
.case-select::after { content: ""; position: absolute; right: 1px; top: 1px; width: 10px; height: 13px; background: linear-gradient(#555, #555) 3px 6px / 5px 1px no-repeat, linear-gradient(#555, #555) 4px 7px / 3px 1px no-repeat, linear-gradient(#555, #555) 5px 8px / 1px 1px no-repeat, #dde2eb; pointer-events: none; }

/* drawing area */
.canvas { position: relative; flex: 1; min-height: 0; border: 1px solid #8f8f8f; border-width: 2px 0 0 1px; background: #fff; }
.model { width: 100%; height: 100%; }
.axis-text { font: 8px "Liberation Sans", sans-serif; }

/* navigator */
.navigator {
  position: absolute;
  left: 25px;
  top: 26px;
  display: flex;
  flex-direction: column;
  width: 226px;
  height: 277px;
  padding: 2px 2px 1px 1px;
  background: #ccd2de;
  border: 1px solid #eef2f8;
  border-right: 2px solid #8d97ad;
  border-bottom: 2px solid #9aa3b6;
  color: #111;
}
.nav-title { display: flex; align-items: center; justify-content: space-between; height: 19px; padding: 0 3px 0 2px; background: #b9c1cd; color: #2f3744; }
.nav-title svg { width: 8px; height: 8px; fill: none; stroke: #444; }
.nav-body { display: flex; flex: 1; margin: 2px 1px 0; border: 1px solid #8d95a5; background: #fcfcf4; min-height: 0; }
.tree { display: grid; grid-auto-rows: 1fr; flex: 1; padding: 0 0 2px 3px; list-style: none; }
.tree li { display: flex; align-items: center; white-space: nowrap; }
.tree svg { width: 14px; height: 12px; margin-right: 2px; }
.rail, .joint { flex: none; width: 15px; height: 100%; background: repeating-linear-gradient(#a9a9a9 0 1px, transparent 1px 2px) 7px 0 / 1px 100% no-repeat; }
.joint { display: flex; align-items: center; padding-left: 4px; background: linear-gradient(90deg, #b5b5b5, #b5b5b5) 8px 50% / 7px 1px no-repeat, repeating-linear-gradient(#a9a9a9 0 1px, transparent 1px 2px) 7px 0 / 1px 100% no-repeat; }
.root .joint { background-size: 7px 1px, 1px 50%; background-position: 8px 50%, 7px 100%; }
.joint b { width: 7px; height: 7px; border: 1px solid #8d97a5; background: #fff; color: #24428c; font: 7px/5px "Liberation Sans", sans-serif; text-align: center; }
.scroll { display: flex; flex-direction: column; align-items: center; gap: 8px; width: 13px; padding: 4px 0; background: #f0f0f0; }
.scroll svg { width: 8px; height: 6px; fill: none; stroke: #222; stroke-width: 1.500; }
.track { flex: 1; width: 12px; padding-top: 44px; padding-bottom: 19px; }
.thumb { display: block; height: 100%; background: #cdcdcd; }
.nav-tabs { display: flex; gap: 5px; height: 19px; padding-left: 2px; color: #3c4659; }
.nav-tabs button { display: flex; align-items: center; gap: 1px; padding: 0 2px; }
.nav-tabs svg { width: 13px; height: 13px; }
.nav-tabs .is-active { background: #eef1f6; }

/* dialog */
.dialog {
  position: absolute;
  left: 289px;
  top: 26px;
  width: 276px;
  background: #f0f0f0;
  border: 1px solid #ababab;
  font: 9px/12px Roboto, "Liberation Sans", sans-serif;
}
.dialog-title { display: flex; align-items: center; justify-content: space-between; height: 19px; padding: 0 8px 0 2px; background: #fff; color: #8d8d8d; font-family: "Open Sans", sans-serif; }
.dialog-title svg { width: 9px; height: 9px; fill: none; stroke: #777; }
.dialog-body { padding: 6px 6px 7px 7px; }
.group { background: #f0f4fa; border: 1px solid #babdf0; border-width: 0 1px 1px 0; clip-path: polygon(0 0, calc(100% - 7px) 0, 100% 7px, 100% 100%, 0 100%); }
.group h3 { height: 12px; padding-left: 1px; background: #dce6f4; color: #1f4a7d; font: 8px/13px "Liberation Sans", sans-serif; margin-right: -1px; }
.top-row { display: grid; grid-template-columns: 76px 76px 1fr; gap: 7px; }
.top-row .group { height: 37px; }
.number-line { display: flex; gap: 4px; padding: 4px 1px; }
.field { width: 36px; height: 16px; padding-right: 4px; background: #fff; border: 1px solid #6f6f6f; text-align: right; }
.field:disabled { background: #ececec; border-color: #c8c8c8; }
.btn { display: grid; place-items: center; width: 20px; height: 16px; background: #e1e1e1; border: 1px solid #adadad; }
.btn svg { width: 18px; height: 14px; fill: none; stroke: #444; }
.btn .r { fill: #d01818; stroke: none; }
.pick, .is-off { background: #c9c9c9; border-color: #c0c0c0; }
.columns { display: grid; grid-template-columns: 120px 1fr; gap: 6px; margin-top: 7px; }
.col { display: flex; flex-direction: column; gap: 7px; }

.coordinates { height: 140px; }
.coord { display: grid; grid-template-columns: 17px 50px 13px 1fr; align-items: center; height: 16px; margin-bottom: 1px; padding-left: 1px; }
.coordinates h3 { margin-bottom: 3px; }
.coord .field { width: 100%; }
.coord span:last-child { padding-left: 3px; }
.spin { display: flex; flex-direction: column; height: 14px; border: 1px solid #c4c4c4; background: #ececec; }
.spin button { flex: 1; display: grid; place-items: center; min-height: 0; }
.spin button::after { content: ""; border: 3px solid transparent; border-bottom-color: #222; border-top: 0; }
.spin button + button { border-top: 1px solid #c4c4c4; }
.spin button + button::after { border: 3px solid transparent; border-top-color: #222; border-bottom: 0; }
.muted .spin button::after { border-bottom-color: #555; }
.muted .spin button + button::after { border-top-color: #555; }
.ref-label { margin: 12px 0 1px; padding-left: 1px; line-height: 13px; }
.choice { display: flex; align-items: center; gap: 2px; height: 15px; padding-left: 2px; }
.choice input { appearance: none; display: grid; place-items: center; width: 10px; height: 10px; background: #fff; border: 1px solid #444; }
.choice input[type="radio"] { border-radius: 50%; }
.choice input[type="radio"]:checked { background: radial-gradient(#222 0 2px, #fff 3px); }
.choice input[type="checkbox"]:checked::after { content: ""; width: 3px; height: 6px; margin-bottom: 2px; border: 1px solid #222; border-width: 0 1px 1px 0; transform: rotate(42deg); }
.choice input:disabled { border-color: #c4c4c4; }

.shapes { height: 143px; padding: 4px 2px; clip-path: none; }
.shape-grid { display: grid; grid-template-columns: repeat(4, 20px); column-gap: 4px; align-content: space-between; height: 98px; }
.c1 { grid-column-start: 1; }
.btn.is-picked { background: #cce6fa; border-color: #3f7fc0; }

.input-mode { height: 205px; }
.input-mode h3 { margin-bottom: 3px; }
.input-mode .choice { height: 17px; }
.muted { color: #9d9d9d; }
.distance { padding-left: 5px; line-height: 15px; }
.measure { display: grid; grid-template-columns: 17px auto 1fr; align-items: center; height: 17px; padding-left: 5px; }
.measure > span:last-child { padding-left: 4px; }
.combo { display: grid; grid-template-columns: 39px 13px 12px; align-items: center; height: 16px; background: #fff; border: 1px solid #86a3c8; }
.combo input { width: 39px; height: 10px; text-align: right; padding-right: 2px; }
.combo input:disabled { background: #efefef; }
.chev { position: relative; height: 14px; display: grid; place-items: center; }
.chev::after, .picker::after { content: ""; width: 5px; height: 5px; border: 1px solid #555; border-width: 0 1px 1px 0; transform: rotate(45deg); margin-top: -3px; }
.muted .chev::after { border-color: #aaa; }
.percent { margin: 3px 0 0 67px; color: #8c8c8c; background: #cfcfcf; border-color: #c0c0c0; }
.input-mode .check-line { margin: 17px 0 0; }
.picker { position: relative; display: block; height: 16px; }
.picker select { appearance: none; display: block; width: 100%; height: 16px; padding-left: 1px; background: #e1e1e1; border: 1px solid #adadad; }
.picker::after { position: absolute; right: 4px; top: 8px; pointer-events: none; }
.picker-wide { margin: 12px 3px 4px 2px; }
.picker-short { width: 67px; margin-left: 22px; }
.picker-short select { padding-left: 2px; }

.length { height: 78px; }
.length .measure { padding-left: 1px; margin-top: 3px; }
.length .step { height: 20px; margin-top: 4px; color: #555; }
.length .step + .measure { margin-top: 0; }
.plain { display: grid; grid-template-columns: 53px 13px; align-items: center; height: 16px; background: #efefef; border: 1px solid #c4c4c4; }
.plain input { width: 53px; height: 14px; }

.dialog-foot { display: flex; gap: 7px; margin-top: 5px; padding-top: 5px; border-top: 2px solid #c2c2c2; }
.apply { width: 57px; margin-left: auto; }

/* status bar */
.statusbar { display: flex; height: 17px; border-top: 1px solid #c6c9cf; background: linear-gradient(#d4d8e0, #aab1be 50%, #b9bfca 60%, #b5bbc6); font: 9px/12px Roboto, "Liberation Sans", sans-serif; color: #333; }
.modes { display: flex; gap: 2px; padding: 0 0 1px 85px; }
.modes button { padding: 0 2px; background: #bcc1cb; border-right: 1px solid #8c929e; }
.modes .is-down { padding: 0 1px; border: 1px solid #3f444d; border-width: 2px 0 0 2px; background: #b3b8c2; box-shadow: 1px 0 #e4e6ea; }
.pane { border-right: 1px solid #9298a2; }
.pane-rest { flex: 1; }
.pane-a { width: 69px; }
.pane-b { width: 58px; }
.pane-c { display: flex; justify-content: flex-end; align-items: flex-end; width: 71px; border: 0; }
.pane-c svg { width: 9px; height: 9px; }
```
